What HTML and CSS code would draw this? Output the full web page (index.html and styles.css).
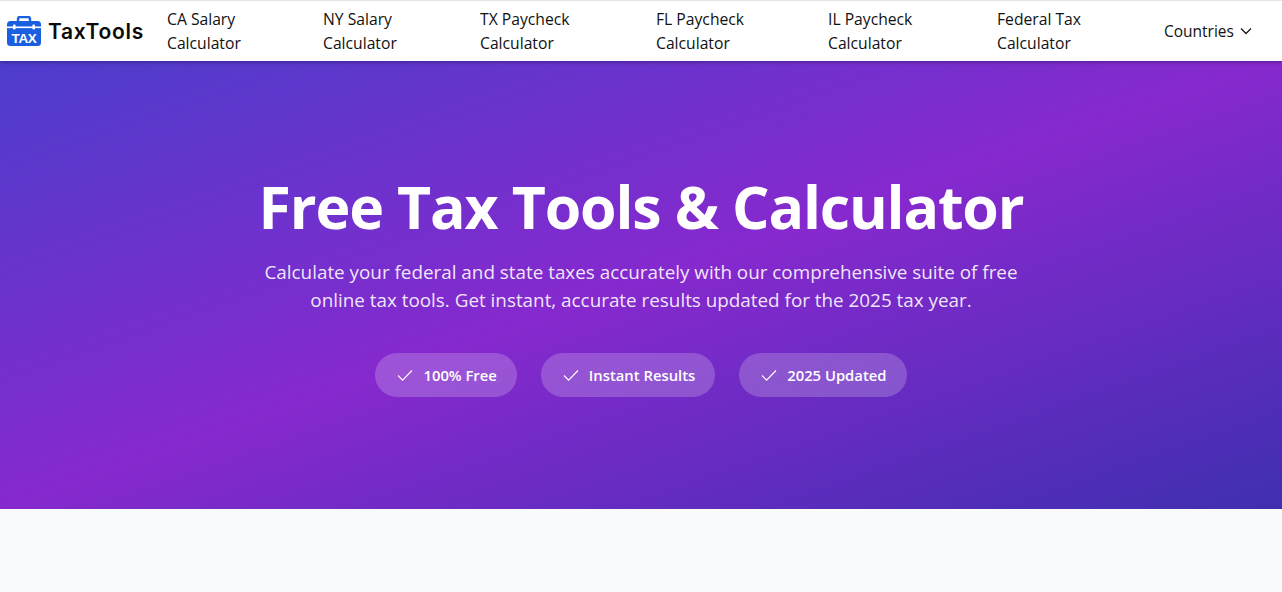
FILE: index.html
```html
<!DOCTYPE html>
<html lang="en">
<head>
    <meta charset="UTF-8">
    <meta name="viewport" content="width=device-width, initial-scale=1.0">
    <title>TaxTools</title>
    <link rel="stylesheet" href="styles.css">
</head>
<body>

<header class="navbar">
    <a class="logo" href="#">
        <svg class="logo-icon" width="34" height="30" viewBox="0 0 34 30">
            <path d="M11 6V3a2 2 0 0 1 2-2h8a2 2 0 0 1 2 2v3" fill="none" stroke="#1a5fe0" stroke-width="2.4"/>
            <rect x="0" y="5" width="34" height="25" rx="3.5" fill="#1a5fe0"/>
            <rect x="0" y="10.5" width="34" height="1.6" fill="#ffffff"/>
            <rect x="6" y="8.5" width="2.6" height="5" rx="1" fill="#ffffff"/>
            <rect x="25.4" y="8.5" width="2.6" height="5" rx="1" fill="#ffffff"/>
            <text class="logo-tax" x="17" y="27" text-anchor="middle">TAX</text>
        </svg>
        <span class="logo-text">TaxTools</span>
    </a>
    <nav class="nav-links">
        <a href="#">CA Salary<br>Calculator</a>
        <a href="#">NY Salary<br>Calculator</a>
        <a href="#">TX Paycheck<br>Calculator</a>
        <a href="#">FL Paycheck<br>Calculator</a>
        <a href="#">IL Paycheck<br>Calculator</a>
        <a href="#">Federal Tax<br>Calculator</a>
    </nav>
    <button class="countries">
        Countries
        <svg width="12" height="12" viewBox="0 0 12 12"><path d="M1 3.5l5 5 5-5" fill="none" stroke="#1a1a1a" stroke-width="1.3"/></svg>
    </button>
</header>

<section class="hero">
    <h1>Free Tax Tools &amp; Calculator</h1>
    <p>Calculate your federal and state taxes accurately with our comprehensive suite of free online tax tools. Get instant, accurate results updated for the 2025 tax year.</p>
    <div class="badges">
        <span class="badge"><svg width="16" height="16" viewBox="0 0 16 16"><path d="M1 8.5l4.6 4.6L15 3.5" fill="none" stroke="#ffffff" stroke-width="1.1"/></svg>100% Free</span>
        <span class="badge"><svg width="16" height="16" viewBox="0 0 16 16"><path d="M1 8.5l4.6 4.6L15 3.5" fill="none" stroke="#ffffff" stroke-width="1.1"/></svg>Instant Results</span>
        <span class="badge"><svg width="16" height="16" viewBox="0 0 16 16"><path d="M1 8.5l4.6 4.6L15 3.5" fill="none" stroke="#ffffff" stroke-width="1.1"/></svg>2025 Updated</span>
    </div>
</section>

<div class="page-rest"></div>

</body>
</html>
```

FILE: styles.css
```css
body {
    font-family: 'Open Sans', 'Noto Sans', sans-serif;
    margin: 0;
    background-color: #f9fafb;
    color: #111111;
    border-top: 1px solid #e5e5e5;
}
a {
    color: inherit;
    text-decoration: none;
}

/* Top bar */
.navbar {
    height: 60px;
    background-color: #ffffff;
    display: flex;
    align-items: center;
    padding-left: 7px;
    box-shadow: 0 1px 4px rgba(0, 0, 0, 0.35);
    position: relative;
}
.logo {
    display: flex;
    align-items: center;
    gap: 7px;
    width: 160px;
}
.logo-tax {
    font-family: 'Liberation Sans', sans-serif;
    font-size: 13.5px;
    font-weight: bold;
    letter-spacing: -0.4px;
    fill: #ffffff;
}
.logo-text {
    font-family: 'Inter', sans-serif;
    font-size: 21px;
    font-weight: 600;
    letter-spacing: 0.7px;
    color: #0a0a0a;
}
.nav-links {
    display: grid;
    grid-template-columns: 156px 157px 176px 172px 169px 167px;
    font-size: 15.7px;
    line-height: 24px;
}
.countries {
    display: flex;
    align-items: center;
    gap: 6px;
    border: none;
    background: none;
    padding: 0;
    font: inherit;
    font-size: 15.5px;
    color: inherit;
}

/* Hero */
.hero {
    height: 448px;
    box-sizing: border-box;
    padding-top: 107px;
    background: linear-gradient(to bottom right, #4d3dcc 0%, #8629ce 50%, #3f2fb0 100%);
    color: #ffffff;
    text-align: center;
}
.hero h1 {
    margin: 0 0 14px;
    font-size: 59px;
    line-height: 76px;
    font-weight: 700;
    letter-spacing: -1.15px;
}
.hero p {
    margin: 0 auto 39px;
    max-width: 768px;
    font-size: 18.85px;
    line-height: 28px;
    color: rgba(255, 255, 255, 0.9);
}
.badges {
    display: flex;
    justify-content: center;
    gap: 24px;
}
.badge {
    display: flex;
    align-items: center;
    gap: 10px;
    height: 44px;
    padding: 0 20px 0 22px;
    border-radius: 22px;
    background-color: rgba(255, 255, 255, 0.2);
    font-size: 14.8px;
    font-weight: 600;
}

.page-rest {
    height: 83px;
}
```
